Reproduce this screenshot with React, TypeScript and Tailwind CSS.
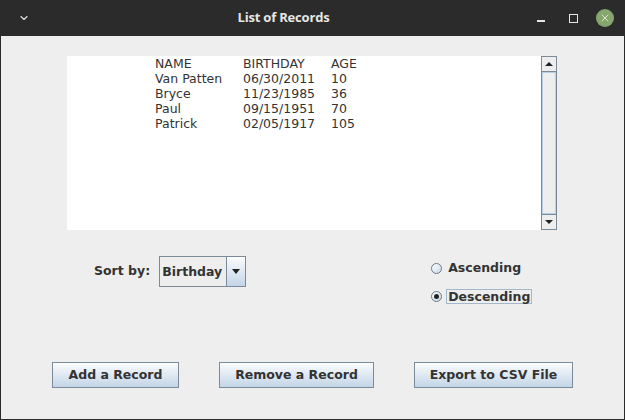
import { ChevronDown, X } from 'lucide-react';

const rows = [
  ['NAME', 'BIRTHDAY', 'AGE'],
  ['Van Patten', '06/30/2011', '10'],
  ['Bryce', '11/23/1985', '36'],
  ['Paul', '09/15/1951', '70'],
  ['Patrick', '02/05/1917', '105'],
];

function MetalButton({ label, className }: { label: string; className: string }) {
  return (
    <button
      className={`h-[26px] border border-[#7a8a99] bg-gradient-to-b from-[#fbfcfd] to-[#c3d5e7] text-[12.5px] font-bold text-[#333] ${className}`}
    >
      {label}
    </button>
  );
}

function Radio({ checked }: { checked?: boolean }) {
  return (
    <span className="flex h-[11px] w-[11px] items-center justify-center rounded-full border border-[#6b7b8a] bg-gradient-to-br from-white to-[#c8d8e8]">
      {checked && <span className="h-[5px] w-[5px] rounded-full bg-[#222]" />}
    </span>
  );
}

export default function App() {
  return (
    <div className="h-[420px] w-[625px] overflow-hidden bg-[#2b2b2b] font-['DejaVu_Sans',sans-serif]">
      <div className="flex h-[36px] items-center rounded-t-[8px] text-[#e6e6e6]">
        <ChevronDown className="ml-[18px] h-[12px] w-[12px]" strokeWidth={2.2} />
        <div className="flex-1 text-center font-['Open_Sans',sans-serif] text-[13px] font-bold tracking-[-0.2px]">
          List of Records
        </div>
        <span className="mr-[24px] mt-[6px] h-[1.5px] w-[8px] bg-[#e6e6e6]" />
        <span className="mr-[18px] h-[9px] w-[9px] border-[1.5px] border-[#e6e6e6]" />
        <span className="mr-[11px] flex h-[18px] w-[18px] items-center justify-center rounded-full bg-[#87a66e]">
          <X className="h-[12px] w-[12px] text-[#eef4e8]" strokeWidth={1.6} />
        </span>
      </div>

      <div className="mx-px flex h-[383px] flex-col bg-[#eeeeee] text-[#333]">
        <div className="ml-[66px] mt-[20px] flex h-[174px] w-[490px]">
          <div className="flex-1 bg-white text-[12.5px] leading-[15px]">
            {rows.map((r, i) => (
              <div key={i} className="grid grid-cols-[88px_88px_88px] pl-[88px]">
                {r.map((c, j) => (
                  <span key={j}>{c}</span>
                ))}
              </div>
            ))}
          </div>
          <div className="flex w-[16px] flex-col border border-[#7a8a99] bg-[#eeeeee]">
            <div className="flex h-[15px] items-center justify-center border-b border-[#7a8a99]">
              <span className="h-0 w-0 border-x-[4px] border-b-[4px] border-x-transparent border-b-[#222]" />
            </div>
            <div className="flex-1 border border-[#b8cfe5]" />
            <div className="flex h-[15px] items-center justify-center border-t border-[#7a8a99]">
              <span className="h-0 w-0 border-x-[4px] border-t-[4px] border-x-transparent border-t-[#222]" />
            </div>
          </div>
        </div>

        <div className="mt-[25px] flex h-[50px]">
          <div className="ml-[93px] mt-[1px] flex h-[31px] items-center">
            <span className="text-[12.5px] font-bold">Sort by:</span>
            <div className="ml-[9px] flex h-[31px] w-[87px] border border-[#7a8a99] bg-[#eeeeee]">
              <span className="flex flex-1 items-center pl-[2px] pt-[1px] text-[12.5px] font-bold">Birthday</span>
              <span className="flex w-[19px] items-center justify-center border-l border-[#7a8a99] bg-gradient-to-b from-[#fbfcfd] to-[#c3d5e7]">
                <span className="h-0 w-0 border-x-[4.5px] border-t-[5px] border-x-transparent border-t-[#222]" />
              </span>
            </div>
          </div>
          <div className="ml-[185px] flex flex-col">
            <div className="mt-[6px] flex h-[15px] items-center gap-[5px]">
              <Radio />
              <span className="pl-[1px] text-[12.5px] font-bold">Ascending</span>
            </div>
            <div className="mt-[13px] flex h-[15px] items-center gap-[4px]">
              <Radio checked />
              <span className="border border-[#a3b8cc] px-[1px] text-[12.5px] font-bold leading-[13px]">
                Descending
              </span>
            </div>
          </div>
        </div>

        <div className="mt-[57px] flex">
          <MetalButton label="Add a Record" className="ml-[51px] w-[127px]" />
          <MetalButton label="Remove a Record" className="ml-[40px] w-[155px]" />
          <MetalButton label="Export to CSV File" className="ml-[40px] w-[159px]" />
        </div>
      </div>
    </div>
  );
}
